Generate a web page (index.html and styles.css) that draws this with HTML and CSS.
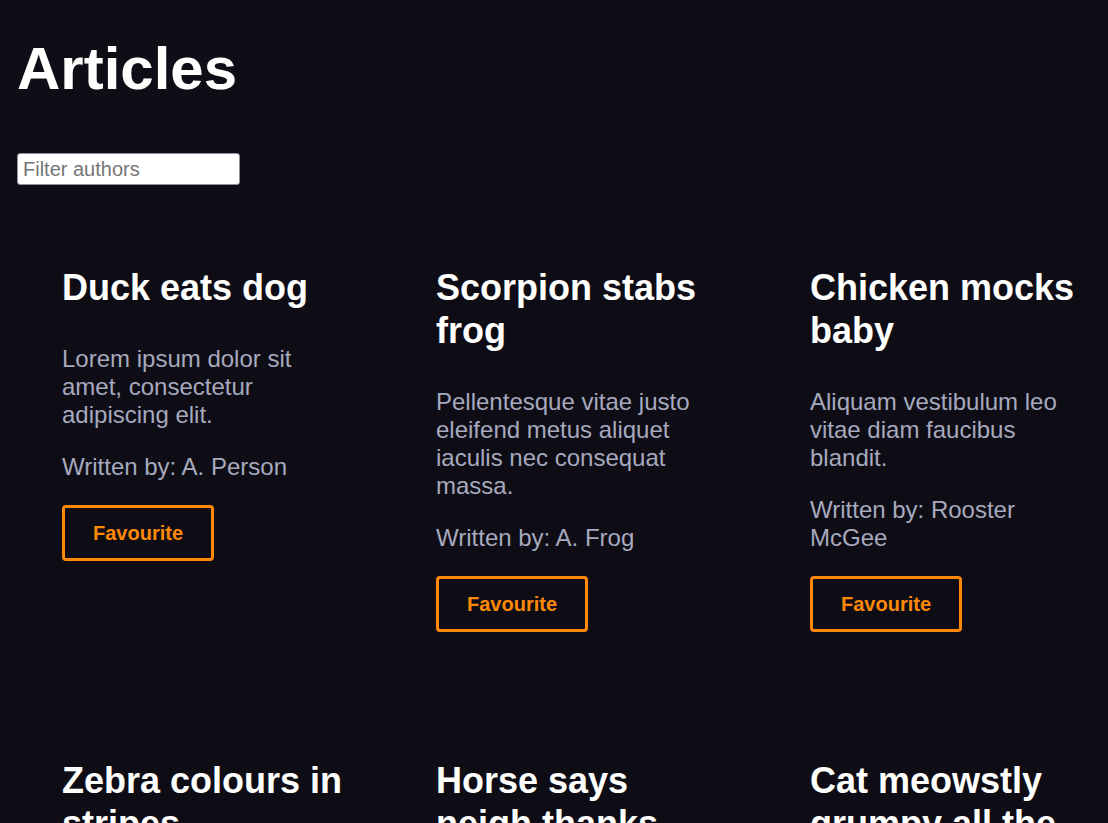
FILE: index.html
```html
<!DOCTYPE html>
<html lang="en">
<head>
<meta charset="utf-8">
<title>Articles</title>
<link rel="stylesheet" href="styles.css">
</head>
<body>
<main class="page">
  <h1 class="page-title">Articles</h1>
  <input class="filter" type="text" placeholder="Filter authors">
  <section class="grid">
    <article class="card">
      <h2 class="card-title">Duck eats dog</h2>
      <p class="card-text">Lorem ipsum dolor sit amet, consectetur adipiscing elit.</p>
      <p class="card-text">Written by: A. Person</p>
      <button class="fav">Favourite</button>
    </article>
    <article class="card">
      <h2 class="card-title">Scorpion stabs frog</h2>
      <p class="card-text">Pellentesque vitae justo eleifend metus aliquet iaculis nec consequat massa.</p>
      <p class="card-text">Written by: A. Frog</p>
      <button class="fav">Favourite</button>
    </article>
    <article class="card">
      <h2 class="card-title">Chicken mocks baby</h2>
      <p class="card-text">Aliquam vestibulum leo vitae diam faucibus blandit.</p>
      <p class="card-text">Written by: Rooster McGee</p>
      <button class="fav">Favourite</button>
    </article>
    <article class="card">
      <h2 class="card-title">Zebra colours in stripes</h2>
      <p class="card-text">Nullam sed lacus vel mi dictum tincidunt.</p>
      <p class="card-text">Written by: Z. Stripes</p>
      <button class="fav">Favourite</button>
    </article>
    <article class="card">
      <h2 class="card-title">Horse says neigh thanks everyone</h2>
      <p class="card-text">Donec vitae nisl et orci porta posuere.</p>
      <p class="card-text">Written by: H. Stable</p>
      <button class="fav">Favourite</button>
    </article>
    <article class="card">
      <h2 class="card-title">Cat meowstly grumpy all the time</h2>
      <p class="card-text">Vivamus feugiat sem non nunc ultrices faucibus.</p>
      <p class="card-text">Written by: C. Whiskers</p>
      <button class="fav">Favourite</button>
    </article>
  </section>
</main>
</body>
</html>
```
FILE: styles.css
```css
html, body {
  margin: 0;
  padding: 0;
  background: #0f0e17;
  overflow: hidden;
}

body {
  font-family: "Liberation Sans", Arial, sans-serif;
  color: #fffffe;
}

.page {
  padding: 0 17px;
  width: 1200px;
}

.page-title {
  margin: 0;
  padding-top: 34px;
  font-size: 60px;
  line-height: 69px;
  font-weight: 700;
  color: #fffffe;
}

.filter {
  display: block;
  margin-top: 50px;
  width: 223px;
  height: 32px;
  box-sizing: border-box;
  padding: 2px 5px;
  border: 1px solid #8f8f9d;
  border-radius: 3px;
  background: #ffffff;
  font-family: "Liberation Sans", Arial, sans-serif;
  font-size: 20px;
  color: #222;
}

.filter::placeholder {
  color: #757575;
}

.grid {
  display: grid;
  grid-template-columns: repeat(3, 330px);
  column-gap: 44px;
  row-gap: 49px;
  margin: 27px 0 0 23px;
}

.card {
  box-sizing: border-box;
  padding: 22px 22px 24px;
  background: #0e0d16;
  box-shadow: 0 0 2px rgba(0, 0, 0, 0.35);
  display: flex;
  flex-direction: column;
  align-items: flex-start;
}

.card-title {
  margin: 32px 0 36px;
  font-size: 36px;
  line-height: 43px;
  font-weight: 700;
  color: #fffffe;
}

.card-text {
  margin: 0 0 24px;
  font-size: 24px;
  line-height: 28px;
  color: #a7a9be;
}

.fav {
  box-sizing: border-box;
  height: 56px;
  padding: 0 28px;
  border: 3px solid #ff8906;
  border-radius: 4px;
  background: transparent;
  color: #ff8906;
  font-family: "Liberation Sans", Arial, sans-serif;
  font-size: 20px;
  font-weight: 700;
  cursor: pointer;
}
```
